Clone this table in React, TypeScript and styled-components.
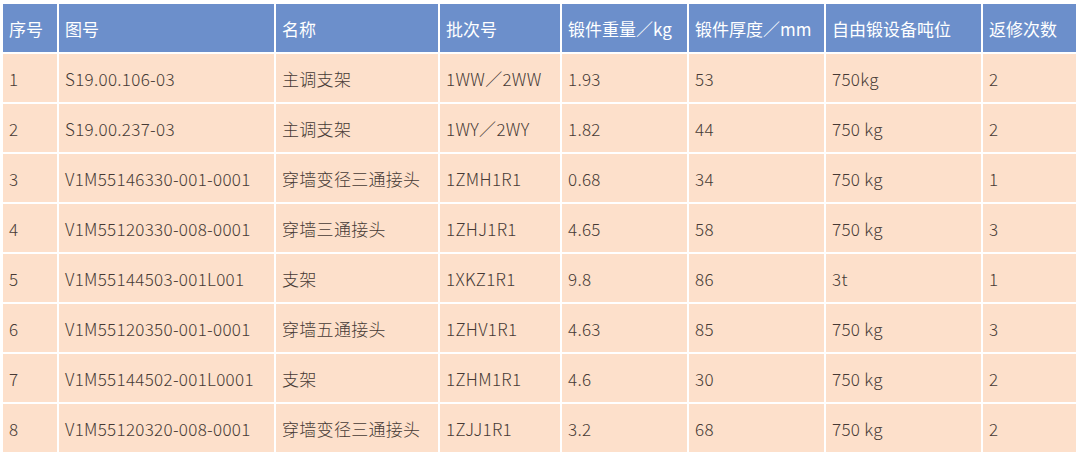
import React from "react";
import styled, { createGlobalStyle } from "styled-components";

const GlobalStyle = createGlobalStyle`
  html, body {
    margin: 0;
    padding: 0;
    background: #ffffff;
  }
  body {
    font-family: "Noto Sans CJK SC", "Noto Sans", sans-serif;
  }
`;

const Page = styled.div`
  padding: 4px 4px 5px 3px;
  background: #ffffff;
`;

const Table = styled.div`
  display: grid;
  grid-template-columns: 54px 215px 162px 120px 125px 135px 155px 93px;
  grid-auto-rows: 48px;
  gap: 2px;
`;

const Cell = styled.div<{ $head?: boolean }>`
  display: flex;
  align-items: center;
  padding-left: 6px;
  background: ${(p) => (p.$head ? "#6c8fcb" : "#fde0cb")};
  color: ${(p) => (p.$head ? "#ffffff" : "#463a35")};
  font-size: 17px;
  font-weight: ${(p) => (p.$head ? 400 : 300)};
  letter-spacing: ${(p) => (p.$head ? "0" : "0.3px")};
  white-space: nowrap;
  overflow: hidden;
`;

const headers = [
  "序号",
  "图号",
  "名称",
  "批次号",
  "锻件重量／kg",
  "锻件厚度／mm",
  "自由锻设备吨位",
  "返修次数",
];

const rows: string[][] = [
  ["1", "S19.00.106-03", "主调支架", "1WW／2WW", "1.93", "53", "750kg", "2"],
  ["2", "S19.00.237-03", "主调支架", "1WY／2WY", "1.82", "44", "750 kg", "2"],
  ["3", "V1M55146330-001-0001", "穿墙变径三通接头", "1ZMH1R1", "0.68", "34", "750 kg", "1"],
  ["4", "V1M55120330-008-0001", "穿墙三通接头", "1ZHJ1R1", "4.65", "58", "750 kg", "3"],
  ["5", "V1M55144503-001L001", "支架", "1XKZ1R1", "9.8", "86", "3t", "1"],
  ["6", "V1M55120350-001-0001", "穿墙五通接头", "1ZHV1R1", "4.63", "85", "750 kg", "3"],
  ["7", "V1M55144502-001L0001", "支架", "1ZHM1R1", "4.6", "30", "750 kg", "2"],
  ["8", "V1M55120320-008-0001", "穿墙变径三通接头", "1ZJJ1R1", "3.2", "68", "750 kg", "2"],
];

export default function App() {
  return (
    <Page>
      <GlobalStyle />
      <Table>
        {headers.map((h) => (
          <Cell key={h} $head>
            {h}
          </Cell>
        ))}
        {rows.map((r, i) =>
          r.map((c, j) => <Cell key={`${i}-${j}`}>{c}</Cell>)
        )}
      </Table>
    </Page>
  );
}
